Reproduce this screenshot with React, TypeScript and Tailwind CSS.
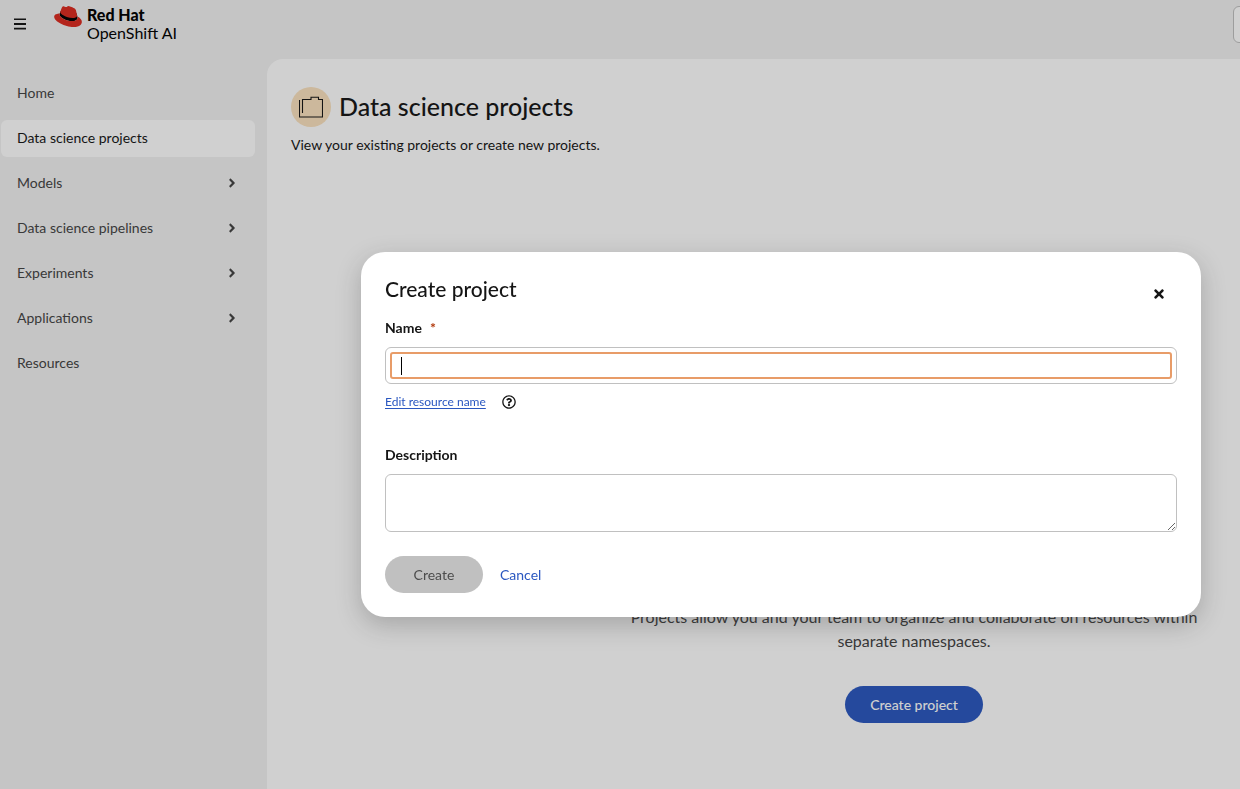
import { useState } from 'react';
import { FaAngleRight, FaRegQuestionCircle, FaTimes } from 'react-icons/fa';

const navItems = [
  { label: 'Home' },
  { label: 'Data science projects', current: true },
  { label: 'Models', expandable: true },
  { label: 'Data science pipelines', expandable: true },
  { label: 'Experiments', expandable: true },
  { label: 'Applications', expandable: true },
  { label: 'Resources' },
];

function RedHatIcon() {
  return (
    <svg viewBox="0 2.9 24 18.2" className="h-[21px] w-7 shrink-0" aria-hidden="true">
      <path
        fill="#000"
        d="M4.866 9.314a2.326 2.326 0 0 0-.24.925c0 2.283 5.165 5.738 11.06 5.734 2.609 0 4.643-.98 4.643-2.745 0-.137 0-.245-.218-1.277L19.6 9.4 5.5 7.4z"
      />
      <path
        fill="#dc2a1e"
        d="M16.009 13.386c1.577 0 3.86-.326 3.86-2.202a1.765 1.765 0 0 0-.04-.431l-.94-4.08c-.216-.898-.406-1.305-1.982-2.093-1.223-.625-3.888-1.658-4.676-1.658-.733 0-.947.946-1.822.946-.842 0-1.467-.706-2.255-.706-.757 0-1.25.515-1.63 1.576 0 0-1.06 2.99-1.197 3.424a.81.81 0 0 0-.028.245c0 1.162 4.577 4.974 10.71 4.974m4.101-1.435c.218 1.032.218 1.14.218 1.277 0 1.765-1.984 2.745-4.593 2.745-5.895.004-11.06-3.451-11.06-5.734a2.326 2.326 0 0 1 .19-.925C2.746 9.415 0 9.794 0 12.217c0 3.969 9.405 8.861 16.851 8.861 5.71 0 7.149-2.582 7.149-4.62 0-1.605-1.387-3.425-3.887-4.512"
      />
    </svg>
  );
}

function ProjectsIcon() {
  return (
    <svg width="24" height="22" viewBox="0 0 24 22" fill="none" stroke="#151515" aria-hidden="true">
      <path strokeWidth="1.1" d="M.5 4v17h23V3.5h-4V1.2H12v2.3H3.5V17" />
    </svg>
  );
}

function Masthead() {
  return (
    <header className="flex h-[59px] items-start justify-between overflow-hidden">
      <div className="flex items-start">
        <button type="button" aria-label="Global navigation" className="flex h-12 w-10 items-center justify-center text-[#151515]">
          <svg width="12" height="12" viewBox="0 0 12 12" fill="currentColor" aria-hidden="true">
            <path d="M0 .4h12v1.7H0zM0 5.1h12v1.8H0zM0 9.8h12v1.7H0z" />
          </svg>
        </button>
        <a href="#home" className="ml-[14px] flex gap-[5px] pt-[6px] text-black">
          <RedHatIcon />
          <span className="flex flex-col text-base leading-[18px]">
            <span className="font-black">Red Hat</span>
            <span>OpenShift AI</span>
          </span>
        </a>
      </div>
      <button
        type="button"
        aria-label="User menu"
        className="mt-[6px] -mr-[93px] h-[37px] w-[100px] rounded-md border border-[#c0c0c0] bg-white"
      />
    </header>
  );
}

function Sidebar() {
  return (
    <nav aria-label="Main" className="w-[267px] shrink-0 pt-4 pr-3 pl-px">
      <ul className="flex flex-col gap-2">
        {navItems.map((item) => (
          <li key={item.label}>
            <a
              href="#nav"
              aria-current={item.current ? 'page' : undefined}
              className={
                item.current
                  ? 'flex h-[37px] items-center justify-between rounded-md bg-white pr-4 pb-[2px] pl-4 text-[#151515]'
                  : 'flex h-[37px] items-center justify-between rounded-md pr-4 pb-[2px] pl-4 text-[#434343]'
              }
            >
              {item.label}
              {item.expandable && <FaAngleRight className="size-[14px]" aria-hidden="true" />}
            </a>
          </li>
        ))}
      </ul>
    </nav>
  );
}

function ProjectsPage() {
  return (
    <main className="min-w-0 grow rounded-tl-2xl bg-white px-6 pt-7">
      <div className="flex items-center gap-2">
        <span className="flex size-10 items-center justify-center rounded-full bg-[#fbe2be]">
          <ProjectsIcon />
        </span>
        <h1 className="pb-[2px] text-[25px] leading-8 font-medium text-[#151515]">Data science projects</h1>
      </div>
      <p className="mt-2 leading-5 text-[#151515]">View your existing projects or create new projects.</p>
      <section className="mt-[450px] flex justify-end pr-4">
        <div className="flex w-[572px] flex-col items-center">
          <p className="text-center text-base leading-6 text-[#434343]">
            Projects allow you and your team to organize and collaborate on resources within separate namespaces.
          </p>
          <button type="button" className="mt-[33px] h-[37px] w-[138px] rounded-full bg-[#2a57c0] font-medium text-white">
            Create project
          </button>
        </div>
      </section>
    </main>
  );
}

function CreateProjectDialog() {
  const [name, setName] = useState('');
  return (
    <div className="fixed inset-0 flex items-start justify-end overflow-auto bg-[#151515]/20 pt-[252px] pr-[39px]">
      <form
        role="dialog"
        aria-modal="true"
        aria-labelledby="dialog-title"
        className="w-[840px] max-w-full rounded-3xl bg-white p-6 text-[#151515] shadow-[0_8px_24px_rgba(41,41,41,0.25)]"
      >
        <div className="flex h-[26px] items-start justify-between">
          <h2 id="dialog-title" className="text-[21px] leading-[26px] font-medium">
            Create project
          </h2>
          <button type="button" aria-label="Close" className="flex h-9 w-[37px] shrink-0 items-center justify-center">
            <FaTimes className="size-[14px]" aria-hidden="true" />
          </button>
        </div>
        <label htmlFor="project-name" className="mt-[15px] flex gap-2 leading-[21px] font-bold">
          Name
          <span className="text-[#b1380b]" aria-hidden="true">
            *
          </span>
        </label>
        <div className="relative mt-[9px] rounded-md border border-[#c0c0c0] p-1">
          <input
            id="project-name"
            type="text"
            required
            value={name}
            onChange={(e) => setName(e.target.value)}
            className="block h-[27px] w-full rounded-[3px] border-2 border-[#e89c68] bg-white px-2 caret-transparent outline-none"
          />
          {name === '' && <span className="absolute top-[9px] left-[15px] h-[18px] w-px bg-black" aria-hidden="true" />}
        </div>
        <div className="mt-2 flex h-5 items-center gap-4">
          <a href="#resource-name" className="text-xs text-[#2a57c0] underline underline-offset-2">
            Edit resource name
          </a>
          <button type="button" aria-label="More info about resource names">
            <FaRegQuestionCircle className="block size-[14px]" aria-hidden="true" />
          </button>
        </div>
        <label htmlFor="project-description" className="mt-8 block leading-[21px] font-bold">
          Description
        </label>
        <textarea
          id="project-description"
          className="mt-[9px] block h-[58px] w-full resize-y rounded-md border border-[#c0c0c0] bg-white px-4 py-2 outline-none"
        />
        <div className="mt-6 flex items-center gap-[17px]">
          <button type="submit" disabled className="h-[37px] w-[98px] rounded-full bg-[#c0c0c0] text-[#4d4d4d]">
            Create
          </button>
          <button type="button" className="h-[37px] text-[#2a57c0]">
            Cancel
          </button>
        </div>
      </form>
    </div>
  );
}

export default function App() {
  return (
    <div className="flex min-h-screen flex-col bg-[#f2f2f2] font-['Lato','Liberation_Sans',sans-serif] text-sm">
      <Masthead />
      <div className="flex grow">
        <Sidebar />
        <ProjectsPage />
      </div>
      <CreateProjectDialog />
    </div>
  );
}
